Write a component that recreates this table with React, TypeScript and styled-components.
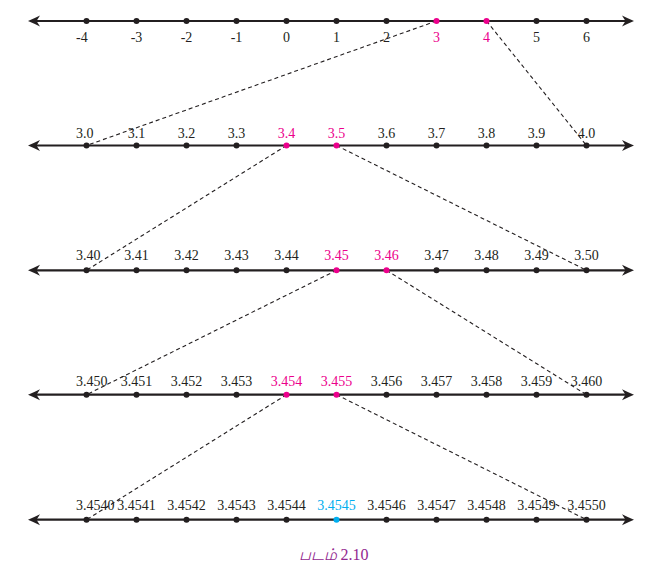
import React from 'react';
import styled, { createGlobalStyle } from 'styled-components';

// Colours taken from the figure
const INK = '#231f20';
const MAGENTA = '#ec008c';
const CYAN = '#00aeef';
const CAPTION = '#92278f';

const GlobalStyle = createGlobalStyle`
  html, body {
    margin: 0;
    padding: 0;
    background: #ffffff;
  }
  body {
    font-family: "Liberation Serif", "DejaVu Serif", serif;
  }
`;

const Figure = styled.figure`
  width: 657px;
  margin: 0;
  display: flex;
  flex-direction: column;
  align-items: center;
`;

const Diagram = styled.svg`
  display: block;
  width: 657px;
  height: 542px;
`;

const Label = styled.text<{ $tone: string }>`
  font-family: "Liberation Serif", "DejaVu Serif", serif;
  font-size: 14px;
  fill: ${({ $tone }) => $tone};
`;

const Caption = styled.figcaption`
  font-family: "Liberation Serif", "Noto Sans", serif;
  font-style: italic;
  font-size: 16px;
  line-height: 26px;
  color: ${CAPTION};
  padding-left: 10px;
`;

const CaptionNumber = styled.span`
  font-style: normal;
`;

// Layout constants
const FIRST_X = 86.5;
const STEP = 50;
const LEFT_TIP = 28;
const RIGHT_TIP = 634;
const tickX = (i: number) => FIRST_X + i * STEP;

type Highlight = { index: number; color: string };

interface LineSpec {
  y: number;
  labels: string[];
  below?: boolean;
  offset: number;
  highlights: Highlight[];
}

const lines: LineSpec[] = [
  {
    y: 21,
    labels: ['-4', '-3', '-2', '-1', '0', '1', '2', '3', '4', '5', '6'],
    below: true,
    offset: 21,
    highlights: [
      { index: 7, color: MAGENTA },
      { index: 8, color: MAGENTA },
    ],
  },
  {
    y: 145.5,
    labels: ['3.0', '3.1', '3.2', '3.3', '3.4', '3.5', '3.6', '3.7', '3.8', '3.9', '4.0'],
    offset: 7.5,
    highlights: [
      { index: 4, color: MAGENTA },
      { index: 5, color: MAGENTA },
    ],
  },
  {
    y: 270.3,
    labels: ['3.40', '3.41', '3.42', '3.43', '3.44', '3.45', '3.46', '3.47', '3.48', '3.49', '3.50'],
    offset: 10,
    highlights: [
      { index: 5, color: MAGENTA },
      { index: 6, color: MAGENTA },
    ],
  },
  {
    y: 394.7,
    labels: ['3.450', '3.451', '3.452', '3.453', '3.454', '3.455', '3.456', '3.457', '3.458', '3.459', '3.460'],
    offset: 9,
    highlights: [
      { index: 4, color: MAGENTA },
      { index: 5, color: MAGENTA },
    ],
  },
  {
    y: 519.7,
    labels: [
      '3.4540', '3.4541', '3.4542', '3.4543', '3.4544', '3.4545',
      '3.4546', '3.4547', '3.4548', '3.4549', '3.4550',
    ],
    offset: 9.5,
    highlights: [{ index: 5, color: CYAN }],
  },
];

// Barbed arrow head pointing left (dir = -1) or right (dir = 1)
const ArrowHead: React.FC<{ x: number; y: number; dir: 1 | -1 }> = ({ x, y, dir }) => {
  const back = x - dir * 12;
  const notch = x - dir * 8.5;
  const d = `M${x},${y} Q${x - dir * 6},${y - 2.5} ${back},${y - 5.5} L${notch},${y} L${back},${y + 5.5} Q${x - dir * 6},${y + 2.5} ${x},${y} Z`;
  return <path d={d} fill={INK} />;
};

const NumberLine: React.FC<{ spec: LineSpec }> = ({ spec }) => {
  const { y, labels, below, offset, highlights } = spec;
  const colorOf = (i: number) => highlights.find((h) => h.index === i)?.color ?? INK;

  return (
    <g>
      <line x1={LEFT_TIP + 4} y1={y} x2={RIGHT_TIP - 4} y2={y} stroke={INK} strokeWidth={2.2} />
      <ArrowHead x={LEFT_TIP} y={y} dir={-1} />
      <ArrowHead x={RIGHT_TIP} y={y} dir={1} />
      {labels.map((label, i) => (
        <circle key={`d${i}`} cx={tickX(i)} cy={y} r={3} fill={colorOf(i)} />
      ))}
      {labels.map((label, i) => (
        <Label
          key={`l${i}`}
          $tone={colorOf(i)}
          x={i === 0 ? 76 : tickX(i)}
          y={below ? y + offset : y - offset}
          textAnchor={i === 0 ? 'start' : 'middle'}
        >
          {label}
        </Label>
      ))}
    </g>
  );
};

// Zoom connectors: the two highlighted points expand onto the ends of the next line
const connectors: [number, number, number, number][] = [];
for (let k = 0; k < lines.length - 1; k++) {
  const top = lines[k];
  const next = lines[k + 1];
  const [a, b] = top.highlights.map((h) => h.index);
  connectors.push([tickX(a), top.y, tickX(0), next.y]);
  connectors.push([tickX(b), top.y, tickX(10), next.y]);
}

const App: React.FC = () => (
  <>
    <GlobalStyle />
    <Figure>
      <Diagram viewBox="0 0 657 542">
        {connectors.map(([x1, y1, x2, y2], i) => (
          <line
            key={i}
            x1={x1}
            y1={y1}
            x2={x2}
            y2={y2}
            stroke={INK}
            strokeWidth={1.1}
            strokeDasharray="4 3"
          />
        ))}
        {lines.map((spec, i) => (
          <NumberLine key={i} spec={spec} />
        ))}
      </Diagram>
      <Caption>
        படம் <CaptionNumber>2.10</CaptionNumber>
      </Caption>
    </Figure>
  </>
);

export default App;
